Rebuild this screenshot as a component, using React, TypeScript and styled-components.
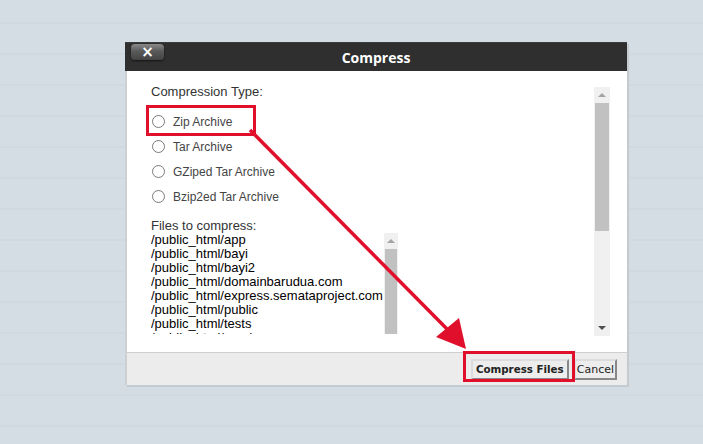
import styled, { createGlobalStyle } from 'styled-components'

const GlobalStyle = createGlobalStyle`
    html, body {
        margin: 0;
        padding: 0;
    }
    body {
        font-family: "Liberation Sans", Arial, sans-serif;
        background: #d3dde3;
    }
`

// page backdrop with the faint horizontal stripes
const Page = styled.div`
    position: relative;
    width: 703px;
    height: 444px;
    overflow: hidden;
    padding: 42px 0 0 125px;
    box-sizing: border-box;
    background-color: #d3dde3;
    background-image: repeating-linear-gradient(
        to bottom,
        transparent 0px,
        transparent 22px,
        #cfd9df 22px,
        #cfd9df 24px,
        transparent 24px,
        transparent 31px
    );
`

const Dialog = styled.div`
    width: 502px;
    display: flex;
    flex-direction: column;
    box-shadow: 2px 2px 0 #c3cbd1;
`

const TitleBar = styled.div`
    position: relative;
    height: 28px;
    background: #2f2f2f;
    border-top: 1px solid #3c3c3c;
    display: flex;
    align-items: center;
    justify-content: center;
    color: #fff;
    font-family: "Open Sans", "DejaVu Sans", sans-serif;
    font-weight: 700;
    font-size: 14px;
`

const CloseButton = styled.div`
    position: absolute;
    left: 6px;
    top: 1px;
    width: 33px;
    height: 16px;
    border-radius: 4px;
    background: linear-gradient(to bottom, #8a8a8a 0%, #5a5a5a 45%, #444 100%);
    box-shadow: 0 1px 2px rgba(0, 0, 0, 0.6);
    display: flex;
    align-items: center;
    justify-content: center;
    color: #fff;
    font-family: "DejaVu Sans", sans-serif;
    font-size: 15px;
    font-weight: 700;
    line-height: 1;
`

const Body = styled.div`
    height: 281px;
    background: #fff;
    border-left: 2px solid #cfcfcf;
    display: flex;
    box-sizing: border-box;
`

const Content = styled.div`
    flex: 1;
    padding: 14px 0 0 24px;
    color: #333;
    font-size: 13px;
    line-height: 14px;
`

const Label = styled.div`
    color: #333;
`

const RadioList = styled.div`
    margin-top: 10px;
    display: flex;
    flex-direction: column;
    font-size: 12px;
`

const RadioRow = styled.div`
    height: 25px;
    display: flex;
    align-items: center;
    gap: 8px;
    padding-left: 1px;
    color: #444;
`

const RadioDot = styled.span`
    width: 11px;
    height: 11px;
    border: 1px solid #7a7a7a;
    border-radius: 50%;
    background: #fff;
`

const FilesBlock = styled.div`
    margin-top: 10px;
`

const FileBox = styled.div`
    width: 247px;
    height: 101px;
    display: flex;
    overflow: hidden;
`

const FileLines = styled.div`
    flex: 1;
    color: #000;
    white-space: nowrap;
`

const Track = styled.div<{ $w: number; $mt?: number; $mb?: number }>`
    width: ${p => p.$w}px;
    margin-top: ${p => p.$mt ?? 0}px;
    margin-bottom: ${p => p.$mb ?? 0}px;
    background: #f0f0f0;
    display: flex;
    flex-direction: column;
    align-items: center;
`

const Arrow = styled.div<{ $down?: boolean }>`
    height: 16px;
    flex: none;
    display: flex;
    align-items: center;
    justify-content: center;
    &::after {
        content: '';
        border-left: 4px solid transparent;
        border-right: 4px solid transparent;
        ${p => (p.$down ? 'border-top: 4px solid #505050;' : 'border-bottom: 4px solid #a3a3a3;')}
    }
`

const Thumb = styled.div<{ $h: number }>`
    width: calc(100% - 2px);
    height: ${p => p.$h}px;
    flex: none;
    background: #c1c1c1;
`

const Spacer = styled.div`
    flex: 1;
`

const Footer = styled.div`
    height: 33px;
    background: #ececec;
    border-top: 1px solid #cfcfcf;
    border-left: 2px solid #cfcfcf;
    box-sizing: border-box;
    display: flex;
    justify-content: flex-end;
    align-items: center;
    gap: 5px;
    padding: 0 10px 0 0;
`

const Button = styled.button<{ $primary?: boolean }>`
    height: 21px;
    padding: 0 ${p => (p.$primary ? 3 : 1)}px;
    background: #ededed;
    border: 2px outset #dcdcdc;
    font-family: "DejaVu Sans", Verdana, sans-serif;
    font-size: ${p => (p.$primary ? 10.3 : 11)}px;
    font-weight: ${p => (p.$primary ? 700 : 400)};
    color: #222;
`

const Overlay = styled.svg`
    position: absolute;
    left: 0;
    top: 0;
    pointer-events: none;
`

const files = [
    '/public_html/app',
    '/public_html/bayi',
    '/public_html/bayi2',
    '/public_html/domainbarudua.com',
    '/public_html/express.semataproject.com',
    '/public_html/public',
    '/public_html/tests',
    '/public_html/wordpress',
]

const types = ['Zip Archive', 'Tar Archive', 'GZiped Tar Archive', 'Bzip2ed Tar Archive']

function App() {
    return (
        <>
            <GlobalStyle />
            <Page>
                <Dialog>
                    <TitleBar>
                        <CloseButton>×</CloseButton>
                        Compress
                    </TitleBar>
                    <Body>
                        <Content>
                            <Label>Compression Type:</Label>
                            <RadioList>
                                {types.map(t => (
                                    <RadioRow key={t}>
                                        <RadioDot />
                                        {t}
                                    </RadioRow>
                                ))}
                            </RadioList>
                            <FilesBlock>
                                <Label>Files to compress:</Label>
                                <FileBox>
                                    <FileLines>
                                        {files.map(f => (
                                            <div key={f}>{f}</div>
                                        ))}
                                    </FileLines>
                                    <Track $w={14}>
                                        <Arrow />
                                        <Thumb $h={85} />
                                    </Track>
                                </FileBox>
                            </FilesBlock>
                        </Content>
                        <Track $w={16} $mt={16} $mb={16} style={{ marginRight: 17 }}>
                            <Arrow />
                            <Thumb $h={128} />
                            <Spacer />
                            <Arrow $down />
                        </Track>
                    </Body>
                    <Footer>
                        <Button $primary>Compress Files</Button>
                        <Button>Cancel</Button>
                    </Footer>
                </Dialog>

                {/* red annotation marks drawn over the dialog */}
                <Overlay width="703" height="444" viewBox="0 0 703 444">
                    <rect x="147.5" y="106.5" width="107" height="28" fill="none" stroke="#e0102c" strokeWidth="3" />
                    <rect x="464.5" y="352.5" width="109" height="28" fill="none" stroke="#e0102c" strokeWidth="3" />
                    <line x1="250" y1="130" x2="448" y2="330" stroke="#e0102c" strokeWidth="3.5" />
                    <polygon points="436,337 459,318 466,349" fill="#e0102c" />
                </Overlay>
            </Page>
        </>
    )
}

export default App
